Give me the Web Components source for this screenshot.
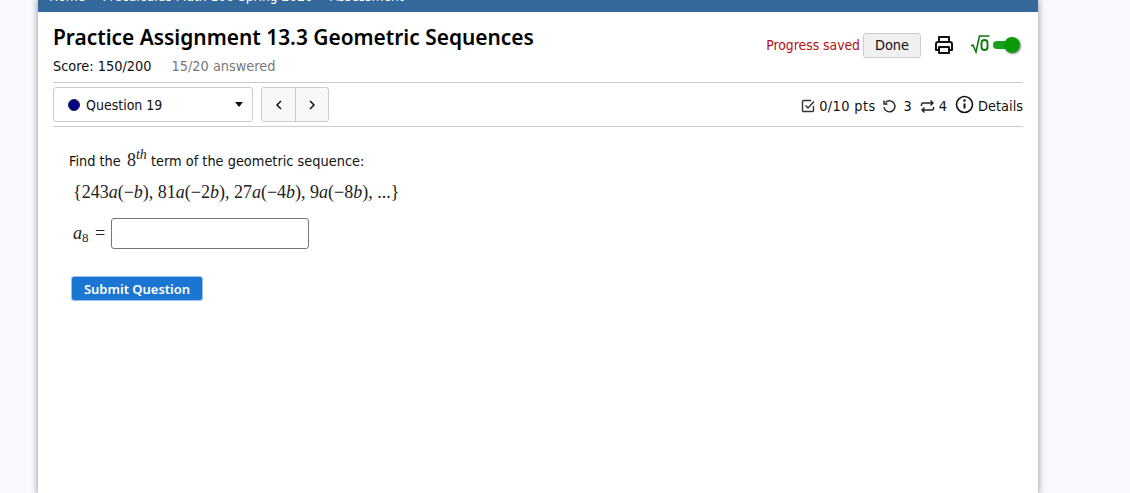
<!DOCTYPE html>
<html>
<head>
<meta charset="utf-8">
<title>Practice Assignment 13.3</title>
<style>
  html, body { margin: 0; padding: 0; height: 100%; overflow: hidden; }
  body { background: #f8f8ff; font-family: "DejaVu Sans Condensed", "DejaVu Sans", sans-serif; color: #111; }
</style>
</head>
<body>
<assess-page>
  <top-bar slot="top"></top-bar>
  <assess-header slot="content"></assess-header>
  <question-nav slot="content"></question-nav>
  <question-body slot="content"></question-body>
</assess-page>

<script>
class AssessPage extends HTMLElement {
    constructor() {
        super();
        this.attachShadow({mode: 'open'});
        this.shadowRoot.innerHTML = `
            <style>
                :host { display: block; width: 1000px; height: 493px; margin-left: 38px; background: #fff; box-shadow: 0 0 6px 1px rgba(0,0,0,.35); overflow: visible; }
                .content { padding: 0 15px; }
            </style>
            <slot name="top"></slot>
            <div class="content"><slot name="content"></slot></div>
        `;
    }
}

class TopBar extends HTMLElement {
    constructor() {
        super();
        this.attachShadow({mode: 'open'});
        this.shadowRoot.innerHTML = `
            <style>
                :host { display: flex; align-items: flex-end; height: 12px; background: #35699b; color: #fff; overflow: hidden; padding-left: 11px; font-size: 13.700px; line-height: 14px; }
                .row { display: flex; gap: 17px; white-space: nowrap; margin-bottom: 9px; }
            </style>
            <div class="row"><span>Home</span><span>Precalculus Math 100 Spring 2020</span><span>Assessment</span></div>
        `;
    }
}

class AssessHeader extends HTMLElement {
    constructor() {
        super();
        this.attachShadow({mode: 'open'});
        this.shadowRoot.innerHTML = `
            <style>
                :host { display: flex; justify-content: space-between; height: 70px; border-bottom: 1px solid #ccc; }
                h1 { margin: 11px 0 0; font-family: "Noto Sans", sans-serif; font-size: 20.900px; line-height: 28px; font-weight: 600; color: #000; }
                .score { margin-top: 7px; font-size: 14.400px; line-height: 17px; display: flex; gap: 20px; }
                .answered { color: #777; }
                .tools { display: flex; align-items: center; height: 24px; margin-top: 21px; }
                .saved { color: #b30f0f; font-size: 13.800px; }
                button { margin-left: 3px; width: 58px; height: 25px; background: #f0f0f0; border: 1px solid #ccc; border-radius: 3px; font: inherit; font-size: 14.400px; color: #111; padding: 0; }
                .print { margin-left: 13px; display: block; }
                .toggle { position: relative; width: 28px; height: 16px; margin-left: 2px; margin-right: 3px; }
                .track { position: absolute; left: 1px; top: 4px; width: 20px; height: 8px; border-radius: 4px; background: #19a019; }
                .knob { position: absolute; right: 0; top: 0; width: 16px; height: 16px; border-radius: 50%; background: #0a9a0a; box-shadow: 1px 1px 2px rgba(0,0,0,.45); }
            </style>
            <div>
                <h1>Practice Assignment 13.3 Geometric Sequences</h1>
                <div class="score"><span>Score: 150/200</span><span class="answered">15/20 answered</span></div>
            </div>
            <div class="tools">
                <span class="saved">Progress saved</span>
                <button>Done</button>
                <svg class="print" width="20" height="20" viewBox="0 0 20 20" fill="none" stroke="#111" stroke-width="2" stroke-linejoin="round">
                    <path d="M5 7V2h10V7"/>
                    <path d="M5 15H2V9a2 2 0 0 1 2-2h12a2 2 0 0 1 2 2v6H15"/>
                    <path d="M5 12h10v6H5z"/>
                </svg>
                <svg width="20" height="20" viewBox="0 0 20 20" style="margin-left:16px" fill="none" stroke="#0a7a0a">
                    <path d="M1 11l2-1 3 7 3.500-16h10" stroke-width="1.600"/>
                    <rect x="11.500" y="5" width="6" height="10" rx="3" stroke-width="1.900"/>
                </svg>
                <div class="toggle"><div class="track"></div><div class="knob"></div></div>
            </div>
        `;
    }
}

class QuestionNav extends HTMLElement {
    constructor() {
        super();
        this.attachShadow({mode: 'open'});
        this.shadowRoot.innerHTML = `
            <style>
                :host { display: flex; align-items: center; justify-content: space-between; height: 43px; border-bottom: 1px solid #ccc; font-size: 14.400px; }
                .left { display: flex; gap: 8px; }
                .select { box-sizing: border-box; width: 200px; height: 35px; display: flex; align-items: center; border: 1px solid #ccc; border-radius: 3px; padding: 0 9px 0 14px; background: #fff; font-size: 14px; }
                .dot { width: 12px; height: 12px; border-radius: 50%; background: #00008b; border: 1px solid #223; box-sizing: border-box; margin-right: 6px; }
                .caret { margin-left: auto; width: 0; height: 0; border-left: 4px solid transparent; border-right: 4px solid transparent; border-top: 5px solid #111; }
                .pager { display: flex; height: 35px; box-sizing: border-box; border: 1px solid #ccc; border-radius: 3px; background: #f8f8f8; }
                .pager div { width: 33px; display: flex; align-items: center; justify-content: center; }
                .pager div + div { border-left: 1px solid #ccc; width: 32px; }
                .right { display: flex; align-items: center; gap: 4px; margin-top: 3px; }
                .right svg { display: block; }
                .gap { margin-left: 4px; }
                .pts { letter-spacing: .4px; }
            </style>
            <div class="left">
                <div class="select"><span class="dot"></span><span>Question 19</span><span class="caret"></span></div>
                <div class="pager">
                    <div><svg width="10" height="12" viewBox="0 0 10 12" fill="none" stroke="#111" stroke-width="1.500"><path d="M7 2L3 6l4 4"/></svg></div>
                    <div><svg width="10" height="12" viewBox="0 0 10 12" fill="none" stroke="#111" stroke-width="1.500"><path d="M3 2l4 4-4 4"/></svg></div>
                </div>
            </div>
            <div class="right">
                <svg width="14" height="14" viewBox="0 0 14 14" fill="none" stroke="#333" stroke-width="1.400"><path d="M12.500 7v4.500a1 1 0 0 1-1 1h-9a1 1 0 0 1-1-1v-9a1 1 0 0 1 1-1H10"/><path d="M4.500 6.500L7 9l6-6.500"/></svg>
                <span class="pts">0/10 pts</span>
                <svg style="margin:0 3px 0 2px" width="15" height="15" viewBox="0 0 15 15" fill="none" stroke="#222" stroke-width="1.400"><path d="M3.500 3.500a5.500 5.500 0 1 1-1.500 4.500"/><path d="M2 1.500v3.500h3.500"/></svg>
                <span>3</span>
                <svg class="gap" width="15" height="15" viewBox="0 0 15 15" fill="none" stroke="#222" stroke-width="1.400"><path d="M1.500 7V5.500a1.500 1.500 0 0 1 1.500-1.500h10M10.500 1.500L13 4l-2.500 2.500"/><path d="M13.500 8v1.500A1.500 1.500 0 0 1 12 11H2M4.500 8.500L2 11l2.500 2.500"/></svg>
                <span>4</span>
                <svg class="gap" width="19" height="19" viewBox="0 0 19 19" style="margin-top:-4px" fill="none" stroke="#111" stroke-width="1.600"><circle cx="9.500" cy="9.500" r="8"/><path d="M9.500 8.500v5" stroke-width="2"/><circle cx="9.500" cy="5.500" r="1.200" fill="#111" stroke="none"/></svg>
                <span>Details</span>
            </div>
        `;
    }
}

class MathText extends HTMLElement {
    constructor() {
        super();
        this.attachShadow({mode: 'open'});
        this.shadowRoot.innerHTML = `
            <style>
                :host { display: inline-block; font-family: "Liberation Serif", serif; font-size: 18px; color: #222; white-space: nowrap; }
            </style>
            <slot></slot>
        `;
    }
}

class QuestionBody extends HTMLElement {
    constructor() {
        super();
        this.attachShadow({mode: 'open'});
        this.shadowRoot.innerHTML = `
            <style>
                :host { display: block; padding: 23px 16px 0; font-size: 14.400px; }
                .find { display: flex; align-items: baseline; height: 24px; }
                .find span { white-space: pre; }
                .eighth { margin-left: 2px; }
                sup { font-size: 14px; font-style: italic; line-height: 0; vertical-align: 7px; font-family: "Liberation Serif", serif; }
                i { font-style: italic; }
                .seq { display: block; margin: 6px 0 0 4px; height: 24px; line-height: 24px; }
                .answer { display: flex; align-items: center; margin: 14px 0 0 4px; }
                .answer math-text { word-spacing: 2px; }
                sub { font-size: 13px; line-height: 0; vertical-align: -3px; }
                input { box-sizing: border-box; width: 198px; height: 31px; margin-left: 6px; border: 1px solid #767676; border-radius: 3px; background: #fff; padding: 0; }
                .submit { display: block; margin: 27px 0 0 2px; width: 132px; height: 25px; padding: 0; background: #1b76d3; border: 1px solid #9cc3ea; border-radius: 3px; color: #fff; font-family: "Noto Sans", sans-serif; font-weight: 600; font-size: 13px; }
            </style>
            <div class="find"><span>Find the </span><math-text class="eighth">8<sup>th</sup></math-text><span> term of the geometric sequence:</span></div>
            <math-text class="seq">{243<i>a</i>(−<i>b</i>), 81<i>a</i>(−2<i>b</i>), 27<i>a</i>(−4<i>b</i>), 9<i>a</i>(−8<i>b</i>), ...}</math-text>
            <div class="answer"><math-text><i>a</i><sub>8</sub> =</math-text><input type="text"></div>
            <button class="submit">Submit Question</button>
        `;
    }
}

customElements.define('assess-page', AssessPage);
customElements.define('top-bar', TopBar);
customElements.define('assess-header', AssessHeader);
customElements.define('question-nav', QuestionNav);
customElements.define('math-text', MathText);
customElements.define('question-body', QuestionBody);
</script>
</body>
</html>
